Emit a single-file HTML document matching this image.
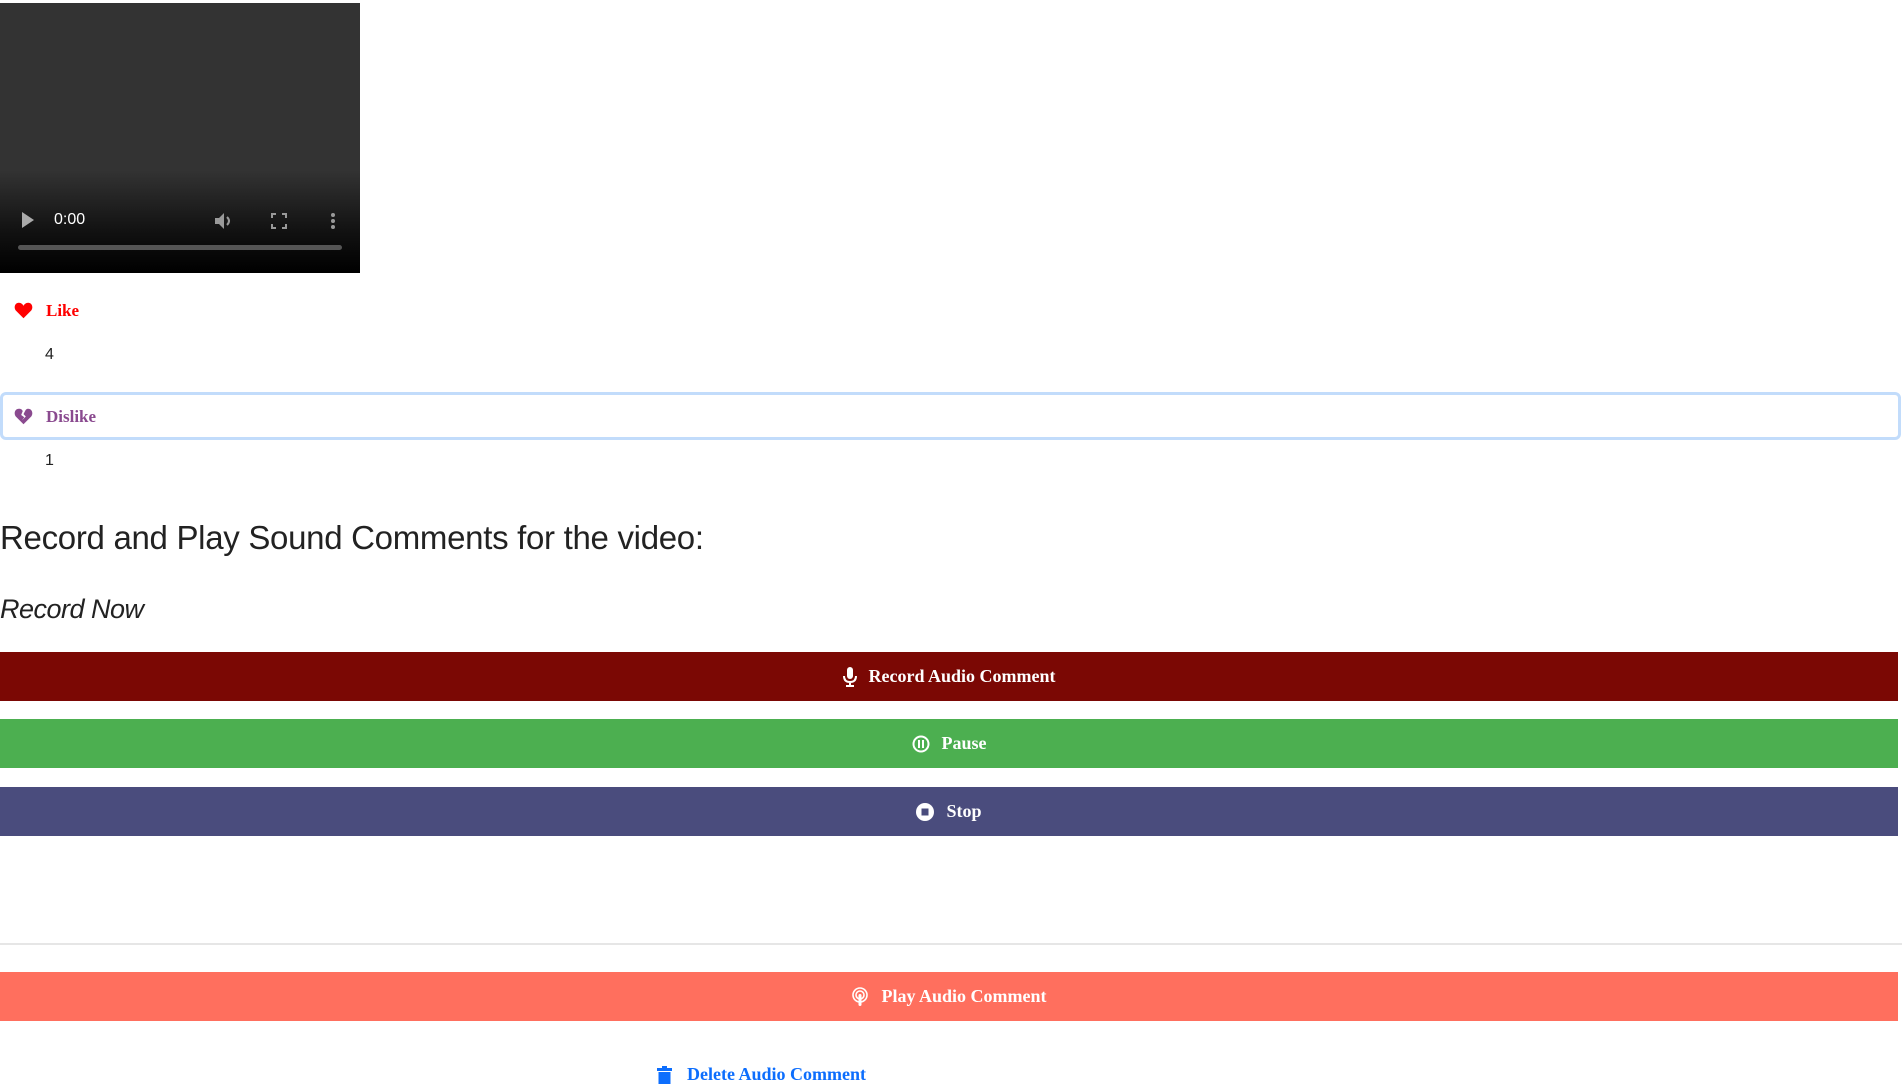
<!DOCTYPE html>
<html><head><meta charset="utf-8"><style>
*{margin:0;padding:0;box-sizing:border-box}
body{width:1902px;height:1080px;overflow:hidden;background:#fff;position:relative;font-family:"Liberation Sans",sans-serif}
.abs{position:absolute}
.video{left:0;top:3px;width:360px;height:270px;background:linear-gradient(#333 0%,#333 62%,#111 85%,#000 100%)}
.btn{position:absolute;left:0;width:1898px;height:49px;color:#fff;font-family:"Liberation Serif",serif;font-weight:bold;font-size:18px;display:flex;align-items:center;justify-content:center}
.btn svg{margin-right:12px}
.ser{font-family:"Liberation Serif",serif;font-weight:bold;font-size:17px}
</style></head><body>
<div class="abs video">
  <svg class="abs" style="left:22px;top:209px" width="12" height="16"><path d="M0 0L12 8L0 16Z" fill="#aaa"/></svg>
  <div class="abs" style="left:54px;top:208px;color:#fff;font-size:16px">0:00</div>
  <svg class="abs" style="left:214px;top:208px" width="22" height="20" viewBox="0 0 22 20"><path d="M1 7H5L10 2V18L5 13H1Z" fill="#999"/><path d="M13 6Q17 10 13 14" stroke="#999" stroke-width="2" fill="none"/></svg>
  <svg class="abs" style="left:271px;top:210px" width="16" height="16"><path d="M1 5V1H5M11 1H15V5M15 11V15H11M5 15H1V11" stroke="#999" stroke-width="2" fill="none"/></svg>
  <div class="abs" style="left:331px;top:210px;width:4px;height:4px;border-radius:2px;background:#999;box-shadow:0 6px 0 #999,0 12px 0 #999"></div>
  <div class="abs" style="left:18px;top:242px;width:324px;height:5px;border-radius:3px;background:#555"></div>
</div>
<svg class="abs" style="left:14px;top:302px" width="19" height="17" viewBox="0 0 24 22"><path d="M12 21L2 11C-1 7 1 1 6 1C9 1 11 3 12 5C13 3 15 1 18 1C23 1 25 7 22 11Z" fill="#f00"/></svg>
<div class="abs ser" style="left:46px;top:301px;color:#f00">Like</div>
<div class="abs" style="left:45px;top:346px;font-size:16px;color:#222">4</div>
<div class="abs" style="left:0;top:392px;width:1901px;height:48px;border:3px solid #c2dcfb;border-radius:6px"></div>
<svg class="abs" style="left:14px;top:408px" width="19" height="17" viewBox="0 0 24 22"><path d="M12 21L2 11C-1 7 1 1 6 1C9 1 10 2 11 4L9 9L13 12L10 16L15 11L12 8L14 4C15 2 16 1 18 1C23 1 25 7 22 11Z" fill="#8a4a8f"/></svg>
<div class="abs ser" style="left:46px;top:407px;color:#8a4a8f">Dislike</div>
<div class="abs" style="left:45px;top:452px;font-size:16px;color:#222">1</div>
<div class="abs" style="left:0;top:519px;font-size:33px;color:#222;letter-spacing:-0.3px">Record and Play Sound Comments for the video:</div>
<div class="abs" style="left:0;top:594px;font-size:27px;font-style:italic;color:#222;letter-spacing:-0.5px">Record Now</div>
<div class="btn" style="top:652px;background:#7b0804"><svg width="14" height="20" viewBox="0 0 14 20"><rect x="4" y="0" width="6" height="12" rx="3" fill="#fff"/><path d="M1 9Q1 15 7 15Q13 15 13 9M7 15V19M3 19H11" stroke="#fff" stroke-width="2" fill="none"/></svg>Record Audio Comment</div>
<div class="btn" style="top:719px;background:#4caf50"><svg width="18" height="18" viewBox="0 0 18 18"><circle cx="9" cy="9" r="7.5" stroke="#fff" stroke-width="2" fill="none"/><rect x="6" y="5" width="2" height="8" fill="#fff"/><rect x="10" y="5" width="2" height="8" fill="#fff"/></svg>Pause</div>
<div class="btn" style="top:787px;background:#4a4c7d"><svg width="18" height="18" viewBox="0 0 18 18"><circle cx="9" cy="9" r="9" fill="#fff"/><rect x="5.5" y="5.5" width="7" height="7" fill="#4a4c7d"/></svg>Stop</div>
<div class="abs" style="left:0;top:943px;width:1902px;height:2px;background:#e6e6e6"></div>
<div class="btn" style="top:972px;background:#ff6f5e"><svg width="18" height="20" viewBox="0 0 18 20"><circle cx="9" cy="8" r="7" stroke="#fff" stroke-width="1.6" fill="none"/><circle cx="9" cy="8" r="4" stroke="#fff" stroke-width="1.6" fill="none"/><rect x="7.5" y="7" width="3" height="12" rx="1.5" fill="#fff"/></svg>Play Audio Comment</div>
<svg class="abs" style="left:657px;top:1066px" width="15" height="18" viewBox="0 0 15 18"><rect x="0" y="2" width="15" height="3" fill="#0d6efd"/><rect x="5" y="0" width="5" height="3" fill="#0d6efd"/><rect x="1.5" y="6" width="12" height="12" fill="#0d6efd"/></svg>
<div class="abs ser" style="left:687px;top:1064px;color:#0d6efd;font-size:18px">Delete Audio Comment</div>
</body></html>
